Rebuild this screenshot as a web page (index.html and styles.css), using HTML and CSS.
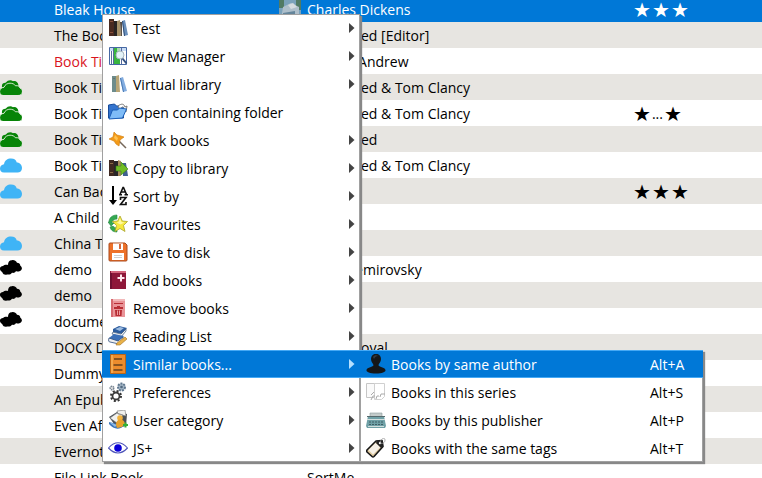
FILE: index.html
```
<!DOCTYPE html>
<html lang="en">
<head>
<meta charset="utf-8">
<title>Library</title>
<link rel="stylesheet" href="styles.css">
</head>
<body>
<svg class="defs" aria-hidden="true">
  <symbol id="cloud" viewBox="0 0 22 15"><path d="M4 14.500C1 14.500 0 12.500 0 10.500 0 8 2 6.500 4 6.300 4.500 2.500 7.500.5 11 .5c3.500 0 5 1.500 5.800 4C20 4.500 22 7 22 10c0 3-2 4.500-4.500 4.500z"/></symbol>
  <symbol id="clouds" viewBox="0 0 22 15"><path d="M2 7C1.500 4 3 2.800 5.500 2.800 8-.2 11-.3 13 1.200c3-.7 5 1 5.500 4.300L16 9H6z"/><path stroke="#e4f2e0" stroke-width=".9" d="M3.500 15.500C1 15.500-.4 14-.4 11.500-.4 9 1.500 7.500 4 7.300 5 4.500 7.500 3.200 10 3.200c2.500 0 4.500 1 5.500 2.600 2.500-.5 4 .5 4.500 2.200 1.500.6 2.400 2 2.400 3.500 0 2.800-2 4-4.400 4z"/></symbol>
  <symbol id="blob" viewBox="0 0 22 15"><path d="M1 11C-1 9 0 6 3 6c1-1 3-1.500 5-1C8 2 9.500 0 12 .2c2-.5 4 .8 5 2.500 2 0 3.500 1.500 3.300 3C22.500 7 22.500 10 20 11c-2 1-3 .5-4 0-1 2-2.500 2-4 1.800-1 1.700-3 2-5 1.700C5 15 3 14.500 2.500 12.500z"/></symbol>
  <symbol id="arrow" viewBox="0 0 6 10"><path d="M0 0l5.500 5L0 10z"/></symbol>
</svg>
<main class="library">
<table class="books">
  <colgroup><col class="c-mark"><col class="c-title"><col class="c-author"><col class="c-rating"></colgroup>
  <tbody>
  <tr class="selected"><td></td><td>Bleak House</td><td><span class="author"><svg class="thumb" viewBox="0 0 22 20"><path fill="#7aa2bb" d="M0 0h22v20H0z"/><path fill="#507a64" d="M0 0h5v8H0zM17 0h5v10h-5z"/><path fill="#aebfcb" d="M4 7l8-4 8 4v13H2z"/><path fill="#64859b" d="M4 13l12-2v9H4z"/><path fill="#d5dce0" d="M9 5l5-2 4 4-6 2z"/></svg>Charles Dickens</span></td><td><span class="stars"><i>★</i><i>★</i><i>★</i></span></td></tr>
  <tr><td></td><td>The Book</td><td><span class="author named"><b>Unnam</b>ed [Editor]</span></td><td></td></tr>
  <tr><td></td><td class="alert">Book Title</td><td><span class="author named">Mayne, Andrew</span></td><td></td></tr>
  <tr><td><svg class="cloud green"><use href="#clouds"/></svg></td><td>Book Title</td><td><span class="author named"><b>Unnam</b>ed &amp; Tom Clancy</span></td><td></td></tr>
  <tr><td><svg class="cloud green"><use href="#clouds"/></svg></td><td>Book Title</td><td><span class="author named"><b>Unnam</b>ed &amp; Tom Clancy</span></td><td><span class="stars"><i>★</i><span>...</span><i>★</i></span></td></tr>
  <tr><td><svg class="cloud green"><use href="#clouds"/></svg></td><td>Book Title</td><td><span class="author named"><b>Unnam</b>ed</span></td><td></td></tr>
  <tr><td><svg class="cloud blue"><use href="#cloud"/></svg></td><td>Book Title</td><td><span class="author named"><b>Unnam</b>ed &amp; Tom Clancy</span></td><td></td></tr>
  <tr><td><svg class="cloud blue"><use href="#cloud"/></svg></td><td>Can Back</td><td></td><td><span class="stars"><i>★</i><i>★</i><i>★</i></span></td></tr>
  <tr><td></td><td>A Child</td><td></td><td></td></tr>
  <tr><td><svg class="cloud blue"><use href="#cloud"/></svg></td><td>China Tea</td><td></td><td></td></tr>
  <tr><td><svg class="cloud dark"><use href="#blob"/></svg></td><td>demo</td><td><span class="author named">Irene Nemirovsky</span></td><td></td></tr>
  <tr><td><svg class="cloud dark"><use href="#blob"/></svg></td><td>demo</td><td></td><td></td></tr>
  <tr><td><svg class="cloud dark"><use href="#blob"/></svg></td><td>document</td><td></td><td></td></tr>
  <tr><td></td><td>DOCX Demo</td><td><span class="author named"><b>Kovid G</b>oyal</span></td><td></td></tr>
  <tr><td></td><td>Dummy</td><td></td><td></td></tr>
  <tr><td></td><td>An Epub</td><td></td><td></td></tr>
  <tr><td></td><td>Even After</td><td></td><td></td></tr>
  <tr><td></td><td>Evernote</td><td></td><td></td></tr>
  <tr><td></td><td>File Link Book</td><td><span class="author named">SortMe</span></td><td></td></tr>
  </tbody>
</table>

<ul class="menu context">
  <li><button type="button"><svg class="icon" viewBox="0 0 20 20"><path fill="#4a2a20" d="M1 1h5v17H1z"/><path fill="#88503a" d="M2 3h3v1H2zM2 14h3v1H2z"/><path fill="#292423" d="M6 3h4v15H6z"/><path fill="#a79168" d="M9 3l3-1 1 16H9z"/><path fill="#5a5046" d="M12 4h2v14h-1z"/><path fill="#6a8fbb" d="M14 3l3-1 3 15-4 1z"/><path fill="#304f79" d="M14 3l1 0 2 15h-1z"/></svg><span>Test</span><svg class="arrow"><use href="#arrow"/></svg></button></li>
  <li><button type="button"><svg class="icon" viewBox="0 0 20 20"><path fill="#fff" stroke="#4668a4" d="M1.500 1.500h17v17h-17z"/><path fill="#c8dcf4" d="M2 2h16v3H2z"/><path fill="#39b540" d="M6 2h6v16H6z"/><path fill="#a9dcae" d="M9 2h3v3H9z"/><path stroke="#566b9d" d="M5.500 2v16M13.500 2v16M3.500 5v13"/><circle cx="12" cy="9" r="4" fill="#e2f2f8" stroke="#a5b4bd"/><path stroke="#34507e" stroke-width="2" d="M14.500 12.500l4 5"/></svg><span>View Manager</span><svg class="arrow"><use href="#arrow"/></svg></button></li>
  <li><button type="button"><svg class="icon" viewBox="0 0 20 20"><path fill="#6d8c8c" d="M4 2h4v16H4z"/><path fill="#b8a576" d="M8 2l3-1 1 17H8z"/><path fill="#66766b" d="M5 4h2v1H5z"/><path fill="#83ade0" d="M12 4l3-1 4 14-4 1z"/><path fill="#4979b3" d="M12 4h1l3 14h-1z"/></svg><span>Virtual library</span><svg class="arrow"><use href="#arrow"/></svg></button></li>
  <li><button type="button"><svg class="icon" viewBox="0 0 20 20"><path fill="#3474ce" stroke="#174b9b" d="M.5 16V3l6-1 2 2h7v12z"/><path fill="#fff" stroke="#777" d="M10 4c4-3 6-2 7 1l2-1-1 6-4-3 2-1c-1-2-3-1-4 2z"/><path fill="#7fbcf7" stroke="#1b5fb8" d="M1 17L4.500 8h5l2-2 7 1-4 9z"/></svg><span>Open containing folder</span></button></li>
  <li><button type="button"><svg class="icon" viewBox="0 0 20 20"><path stroke="#76685a" stroke-width="1.500" d="M11 11l7 7"/><path fill="#f39a18" stroke="#cc7a0c" stroke-width=".6" d="M6 2l3 3 4 1 3 1-4 3-1 6-3-2-2-3-5-2 4-2z"/><path fill="#ffc250" d="M7 5l3 3-1 3-3-3z"/></svg><span>Mark books</span><svg class="arrow"><use href="#arrow"/></svg></button></li>
  <li><button type="button"><svg class="icon" viewBox="0 0 20 20"><path fill="#402922" d="M1 2h5v16H1z"/><path fill="#8b6b47" d="M2 5h3v1H2zM2 14h3v1H2z"/><path fill="#292629" d="M6 3h5v15H6z"/><path fill="#a78b5c" d="M10 2l3 1v15h-3z"/><path fill="#405f92" d="M14 5h4l2 13h-5z"/><path fill="#71bd25" stroke="#398015" stroke-width=".6" d="M8 8h5V4l7 7-7 6v-4H8z"/></svg><span>Copy to library</span><svg class="arrow"><use href="#arrow"/></svg></button></li>
  <li><button type="button"><svg class="icon" viewBox="0 0 20 20"><path fill="none" stroke="#000" stroke-width="2" d="M5 0v15"/><path d="M1 14h8l-4 5z"/><path fill="none" stroke="#111" stroke-width="1.600" d="M12 8.500l3-7h.5l3 7M13 6h4.500M11 8.700h3M16.500 8.700h3.500M12.500 14v-2.500h5.500l-5.500 7H18V16"/></svg><span>Sort by</span><svg class="arrow"><use href="#arrow"/></svg></button></li>
  <li><button type="button"><svg class="icon" viewBox="0 0 20 20"><path fill="#35a852" stroke="#218942" stroke-width=".6" d="M9 1C4 1 1 4 1 8l-1 0 3 4 3-3H4c0-2 2-4 5-4zM2 13c1 4 4 5 7 5v-4c-2 0-3-1-4-2z"/><path fill="#f5e73d" stroke="#a9a42b" stroke-width=".8" d="M12 2l2.300 5 5.200.5-4 4 1.500 6-5-3-5 3 1.500-6-4-4 5.200-.5z"/><path fill="#fff9a0" d="M12 4l1.500 4 3 .5-4 2-4-2 2-.5z"/></svg><span>Favourites</span><svg class="arrow"><use href="#arrow"/></svg></button></li>
  <li><button type="button"><svg class="icon" viewBox="0 0 20 20"><path fill="#ed7129" stroke="#a94b1e" d="M2 1h15l2 2v15q0 1-1 1H2q-1 0-1-1V2q0-1 1-1z"/><path fill="#fff" d="M5 1.500h10V8H5zM4 11h12v7H4z"/><path fill="#d5673a" d="M11 2h2v5h-2z"/><path stroke="#cfcfcf" d="M6 13.500h8M6 15.500h8"/></svg><span>Save to disk</span><svg class="arrow"><use href="#arrow"/></svg></button></li>
  <li><button type="button"><svg class="icon" viewBox="0 0 20 20"><path fill="#8e1739" d="M2 1h16v18H2z"/><path fill="#d4667d" d="M3 1h15v2H3z"/><path fill="#6e1031" d="M2 3h2v16H2z"/><path stroke="#ffe7ed" stroke-width="2" d="M9.500 8h7M13 4.500v7"/></svg><span>Add books</span><svg class="arrow"><use href="#arrow"/></svg></button></li>
  <li><button type="button"><svg class="icon" viewBox="0 0 20 20"><path fill="#e99498" d="M3 1h14v18H3z"/><path fill="#d5686e" d="M3 1h2v18H3z"/><path fill="#f2b8b9" d="M5 1h12v2H5z"/><path stroke="#b72d34" d="M6 5.500h9"/><path fill="#b72d34" d="M6 9h3V8h3v1h3v2H6zM7 12h7l-.5 6h-6z"/><path stroke="#ee9da0" d="M9.500 12.500v4.500M11.500 12.500v4.500"/></svg><span>Remove books</span><svg class="arrow"><use href="#arrow"/></svg></button></li>
  <li><button type="button"><svg class="icon" viewBox="0 0 20 20"><path fill="#2c5c9d" d="M5 3l6-3 8 2-5 6-9-2z"/><path fill="#9dbce0" d="M7 3l5-2 4 1-4 3z"/><path fill="#eee" stroke="#315077" stroke-width=".7" d="M5 6l8 2 5-5v2l-5 6-9-3z"/><path fill="#3c70b7" d="M1 12l5-4 10 2-5 6-9-1z"/><path fill="#eee" stroke="#294b7e" stroke-width=".8" d="M1 12c-1 3 0 4 1 4l9 2 4-5v-2l-5 4z"/><path fill="#e9b249" stroke="#a36e22" stroke-width=".6" d="M9 17l8-6 2 2-7 6-4 0z"/></svg><span>Reading List</span><svg class="arrow"><use href="#arrow"/></svg></button></li>
  <li class="open"><button type="button" aria-expanded="true"><svg class="icon" viewBox="0 0 20 20"><path fill="#ed8c2c" stroke="#b96618" d="M2.500.5h15v19h-15z"/><path fill="#f4a84d" d="M3 1h2v18H3z"/><path stroke="#66401d" stroke-width="1.400" d="M6 5h8M5.500 11h9M5.500 16h9"/></svg><span>Similar books...</span><svg class="arrow"><use href="#arrow"/></svg></button>
    <ul class="menu sub">
      <li class="open"><button type="button"><svg class="icon" viewBox="0 0 20 20"><path fill="#151719" d="M5 5c0-7 10-7 10 0 0 3-2 4-2.500 6 0 2 6.500 2 7 5 .3 2-3 3.500-9.500 3.500S.2 18 .5 16c.5-3 7-3 7-5C7 9 5 8 5 5z"/><path fill="#363b40" d="M7 3c1-2 4-2 5-1-2 0-3 1-4 3z"/></svg><span>Books by same author</span><kbd>Alt+A</kbd></button></li>
      <li><button type="button"><svg class="icon" viewBox="0 0 20 20"><path fill="#fafafa" stroke="#c6c6c6" d="M.5 1.500h10v14H.5z"/><path fill="#fff" stroke="#d0d0d0" d="M8.500 1.500h10v13l-3 3h-7z"/><path fill="none" stroke="#aaa" d="M5 18l2-4h2M10 17l1-3h2M14 15l1-3h4M8 10l-3 3"/></svg><span>Books in this series</span><kbd>Alt+S</kbd></button></li>
      <li><button type="button"><svg class="icon" viewBox="0 0 20 20"><path fill="#c3cbca" stroke="#8a9b9c" stroke-width=".6" d="M4 3h12v4H4z"/><path fill="#6fa0a6" d="M2 6h16l2 10-1 2H1l-1-2z"/><path fill="#d2dedd" d="M1 9h18v1H1zM2 16h16v1H2z"/><path stroke="#3f5f66" stroke-width="1.200" stroke-dasharray="2 1" d="M3 12h14M3 14.500h14"/><path stroke="#56696c" d="M1 6.500h18"/></svg><span>Books by this publisher</span><kbd>Alt+P</kbd></button></li>
      <li><button type="button"><svg class="icon" viewBox="0 0 20 20"><path fill="#dfc99f" stroke="#161616" stroke-width="1.600" stroke-linejoin="round" d="M1 12l9-9 6-.5 1 6L8 18.500q-1 1-2 0L1 14q-.6-1 0-2z"/><path fill="#f7f1e7" d="M2.500 12l7-7 5 4-7.500 7.500z"/><path fill="#222" d="M11 2.500l5 0 1 6-2 1.500-5-5z"/><circle cx="14" cy="5" r="1.200" fill="#fff"/><path fill="none" stroke="#999" stroke-width=".8" d="M14 5c1-5 5-6 5-3s-3 4-5 3"/></svg><span>Books with the same tags</span><kbd>Alt+T</kbd></button></li>
    </ul>
  </li>
  <li><button type="button"><svg class="icon" viewBox="0 0 20 20"><circle cx="13.500" cy="5" r="3.500" fill="#a2b4c4" stroke="#60788f" stroke-width="2" stroke-dasharray="2 1"/><circle cx="13.500" cy="5" r="1.300" fill="#526a80"/><circle cx="4" cy="6" r="1.800" fill="#ddd" stroke="#778491" stroke-width="1.500" stroke-dasharray="1.500 .6"/><circle cx="8" cy="14" r="5" fill="none" stroke="#333" stroke-width="2" stroke-dasharray="2 1.930"/><circle cx="8" cy="14" r="3.500" fill="#fff" stroke="#3b3b3b" stroke-width="1.800"/></svg><span>Preferences</span><svg class="arrow"><use href="#arrow"/></svg></button></li>
  <li><button type="button"><svg class="icon" viewBox="0 0 20 20"><path fill="#4a5056" d="M1 7l8-5 10 2-1 12-9 2z"/><path fill="#f1f1ee" stroke="#777" stroke-width=".6" d="M2 8l7-5 6 2-6 8zM9 1l8-1 1 6-8-2z"/><path fill="#3b75ba" d="M1 12l8 2 7-3 1 4c-5 5-11 5-16-1z"/><path fill="#90bae4" d="M1 12l6 5 2-2z"/><circle cx="12" cy="8" r="2.800" fill="#f0b13c"/><path fill="#e7a12c" d="M8 15c0-7 8-7 9-1l-3 3-5 1z"/><path stroke="#35af36" stroke-width="2" d="M15 15h5M17.500 12.500v5"/></svg><span>User category</span><svg class="arrow"><use href="#arrow"/></svg></button></li>
  <li><button type="button"><svg class="icon" viewBox="0 0 20 20"><path fill="#fff" stroke="#4d54b9" stroke-width="1.100" d="M.5 10Q10-.5 19.500 10 10 20 .5 10z"/><circle cx="10" cy="10" r="3.800" fill="#0900d8"/></svg><span>JS+</span><svg class="arrow"><use href="#arrow"/></svg></button></li>
</ul>
</main>
</body>
</html>
```
FILE: styles.css
```
* { box-sizing: border-box; }

body {
  margin: 0;
  background: #fff;
  color: #000;
  font: 14px/20px "Segoe UI", "Open Sans", sans-serif;
}

.defs {
  position: absolute;
  width: 0;
  height: 0;
}

.library {
  position: relative;
  height: 100vh;
  overflow: hidden;
}

/* The list is scrolled a few pixels past its first row. */
.books {
  width: 100%;
  margin-top: -4px;
  table-layout: fixed;
  border-collapse: collapse;
}

.c-mark { width: 54px; }
.c-title { width: 225px; }
.c-author { width: 354px; }

.books td {
  height: 26px;
  padding: 2px 0 0;
  white-space: nowrap;
}

.books tr:nth-child(even) { background: #e7e5e1; }
.books .selected { background: #0078d7; color: #fff; }
.books .alert { color: #d9141e; }

.author {
  display: flex;
  align-items: center;
  gap: 6px;
}

.author.named {
  gap: 0;
  padding-left: 28px;
}

.author b {
  display: flex;
  justify-content: flex-end;
  width: 54px;
  font-weight: 400;
}

.thumb {
  width: 22px;
  height: 20px;
}

.stars {
  display: flex;
  align-items: center;
  gap: 1px;
  height: 24px;
}

.stars i {
  font: normal 20px/24px "DejaVu Sans", sans-serif;
}

.cloud {
  display: block;
  width: 22px;
  height: 15px;
  margin-bottom: 2px;
}

.green { fill: #078407; }
.blue { fill: #3fb4f6; }
.dark { fill: #000; margin-bottom: 6px; }

.menu {
  position: absolute;
  z-index: 1;
  margin: 0;
  padding: 0;
  list-style: none;
  background: #fff;
  box-shadow: inset 0 0 0 1px #a0a0a0, 2px 2px 1px #888;
}

.context {
  top: 14px;
  left: 102px;
  width: 258px;
}

.sub {
  top: 0;
  left: 100%;
  width: 343px;
}

.menu li { position: relative; }

.menu button {
  display: flex;
  align-items: center;
  gap: 5px;
  width: 100%;
  height: 28px;
  padding: 0 5px 0 6px;
  border: 0;
  background: none;
  color: #000;
  font: inherit;
  text-align: left;
}

.menu .open > button {
  background: #0078d7;
  color: #fff;
  box-shadow: inset 0 1px #45a9f5, inset 0 -1px #45a9f5;
}

.icon {
  flex: none;
  width: 20px;
  height: 20px;
}

.menu span,
.menu kbd {
  padding-top: 2px;
}

.menu span { flex: 1; }

.arrow {
  width: 6px;
  height: 10px;
  fill: #444;
}

.open > button .arrow { fill: #b5e0ff; }

kbd {
  width: 48px;
  font: inherit;
}
```
